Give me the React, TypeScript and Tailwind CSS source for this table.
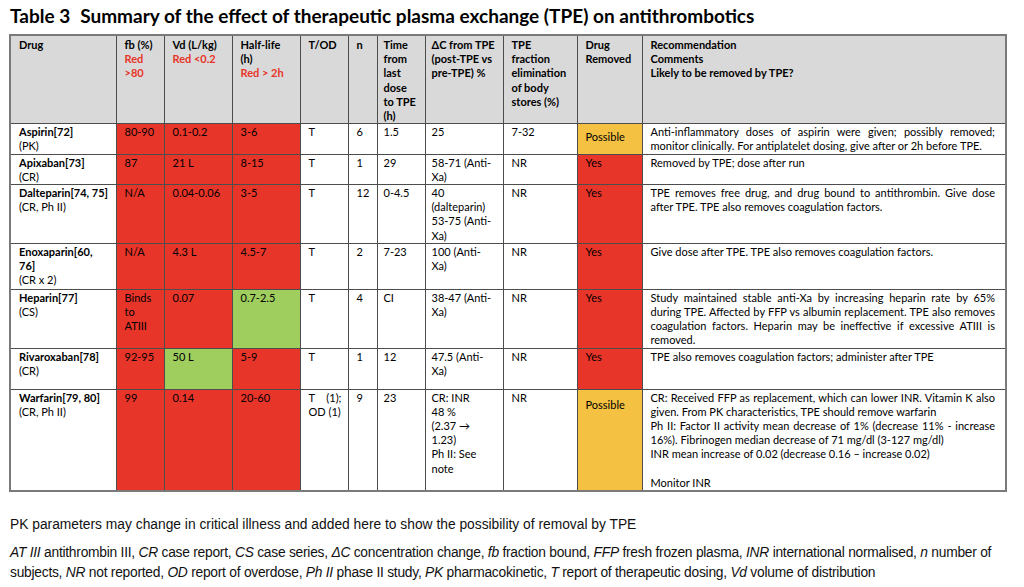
import type { ReactNode } from "react";

type Tone = "red" | "green" | "amber" | "none";

const toneBg: Record<Tone, string> = {
  red: "bg-[#e8352a]",
  green: "bg-[#9fcd5e]",
  amber: "bg-[#f4c143]",
  none: "",
};

interface CellProps {
  children: ReactNode;
  tone?: Tone;
  className?: string;
}

function Td({ children, tone = "none", className = "" }: CellProps) {
  return (
    <td className={`border border-[#4d4d4d] align-top px-2 pt-[1px] whitespace-nowrap overflow-hidden ${toneBg[tone]} ${className}`}>
      {children}
    </td>
  );
}

function Th({ children, className = "" }: { children: ReactNode; className?: string }) {
  return (
    <th className={`border border-[#4d4d4d] bg-[#d9d9d9] align-top text-left font-bold px-2 pt-[2px] whitespace-nowrap overflow-hidden ${className}`}>
      {children}
    </th>
  );
}

// lines that stretch edge to edge, as in the justified source
function J({ children }: { children: ReactNode }) {
  return <div className="whitespace-normal text-justify [text-align-last:justify]">{children}</div>;
}

function L({ children }: { children: ReactNode }) {
  return <div>{children}</div>;
}

function DrugName({ name, note }: { name: ReactNode; note: string }) {
  return (
    <>
      <div className="font-bold">{name}</div>
      <div>{note}</div>
    </>
  );
}

const Red = ({ children }: { children: ReactNode }) => <div className="text-[#e8352a]">{children}</div>;

export default function App() {
  return (
    <div className="w-[1024px] h-[587px] bg-white text-black overflow-hidden font-['Lato','Open_Sans',sans-serif]">
      <h1 className="h-[34px] pl-[10px] pt-[3px] text-[19px] leading-[26px] font-bold">
        <span className="mr-[10px]">Table 3</span>Summary of the effect of therapeutic plasma exchange (TPE) on antithrombotics
      </h1>

      <table className="ml-[9px] w-[996px] table-fixed border-collapse border-2 border-[#7a7a7a] text-[11px] leading-[14.2px]">
        <colgroup>
          <col className="w-[106px]" />
          <col className="w-[48px]" />
          <col className="w-[68px]" />
          <col className="w-[68px]" />
          <col className="w-[48px]" />
          <col className="w-[29px]" />
          <col className="w-[48px]" />
          <col className="w-[78px]" />
          <col className="w-[74px]" />
          <col className="w-[65px]" />
          <col className="w-[364px]" />
        </colgroup>
        <thead>
          <tr className="h-[86px]">
            <Th>Drug</Th>
            <Th>
              <L>fb (%)</L>
              <Red>Red</Red>
              <Red>&gt;80</Red>
            </Th>
            <Th>
              <L>Vd (L/kg)</L>
              <Red>Red &lt;0.2</Red>
            </Th>
            <Th>
              <L>Half-life</L>
              <L>(h)</L>
              <Red>Red &gt; 2h</Red>
            </Th>
            <Th>T/OD</Th>
            <Th>n</Th>
            <Th className="pl-1.5">
              <L>Time</L>
              <L>from</L>
              <L>last</L>
              <L>dose</L>
              <L>to TPE</L>
              <L>(h)</L>
            </Th>
            <Th className="pl-1.5">
              <L>ΔC from TPE</L>
              <L>(post-TPE vs</L>
              <L>pre-TPE) %</L>
            </Th>
            <Th>
              <L>TPE</L>
              <L>fraction</L>
              <L>elimination</L>
              <L>of body</L>
              <L>stores (%)</L>
            </Th>
            <Th>
              <L>Drug</L>
              <L>Removed</L>
            </Th>
            <Th>
              <L>Recommendation</L>
              <L>Comments</L>
              <L>Likely to be removed by TPE?</L>
            </Th>
          </tr>
        </thead>
        <tbody>
          <tr className="h-[28px]">
            <Td><DrugName name="Aspirin[72]" note="(PK)" /></Td>
            <Td tone="red">80-90</Td>
            <Td tone="red">0.1-0.2</Td>
            <Td tone="red">3-6</Td>
            <Td>T</Td>
            <Td>6</Td>
            <Td className="pl-1.5">1.5</Td>
            <Td className="pl-1.5">25</Td>
            <Td>7-32</Td>
            <Td tone="amber" className="pt-[6px]">Possible</Td>
            <Td className="pr-[10px]">
              <J>Anti-inflammatory doses of aspirin were given; possibly removed;</J>
              <L>monitor clinically. For antiplatelet dosing, give after or 2h before TPE.</L>
            </Td>
          </tr>
          <tr className="h-[28px]">
            <Td><DrugName name="Apixaban[73]" note="(CR)" /></Td>
            <Td tone="red">87</Td>
            <Td tone="red">21 L</Td>
            <Td tone="red">8-15</Td>
            <Td>T</Td>
            <Td>1</Td>
            <Td className="pl-1.5">29</Td>
            <Td className="pl-1.5">
              <L>58-71 (Anti-</L>
              <L>Xa)</L>
            </Td>
            <Td>NR</Td>
            <Td tone="red">Yes</Td>
            <Td className="pr-[10px]">Removed by TPE; dose after run</Td>
          </tr>
          <tr className="h-[56px]">
            <Td><DrugName name="Dalteparin[74, 75]" note="(CR, Ph II)" /></Td>
            <Td tone="red">N/A</Td>
            <Td tone="red">0.04-0.06</Td>
            <Td tone="red">3-5</Td>
            <Td>T</Td>
            <Td>12</Td>
            <Td className="pl-1.5">0-4.5</Td>
            <Td className="pl-1.5">
              <L>40</L>
              <L>(dalteparin)</L>
              <L>53-75 (Anti-</L>
              <L>Xa)</L>
            </Td>
            <Td>NR</Td>
            <Td tone="red">Yes</Td>
            <Td className="pr-[10px]">
              <J>TPE removes free drug, and drug bound to antithrombin. Give dose</J>
              <L>after TPE. TPE also removes coagulation factors.</L>
            </Td>
          </tr>
          <tr className="h-[46px]">
            <Td>
              <div className="font-bold">Enoxaparin[60,</div>
              <div className="font-bold">76]</div>
              <div>(CR x 2)</div>
            </Td>
            <Td tone="red">N/A</Td>
            <Td tone="red">4.3 L</Td>
            <Td tone="red">4.5-7</Td>
            <Td>T</Td>
            <Td>2</Td>
            <Td className="pl-1.5">7-23</Td>
            <Td className="pl-1.5">
              <L>100 (Anti-</L>
              <L>Xa)</L>
            </Td>
            <Td>NR</Td>
            <Td tone="red">Yes</Td>
            <Td className="pr-[10px]">Give dose after TPE. TPE also removes coagulation factors.</Td>
          </tr>
          <tr className="h-[57px]">
            <Td><DrugName name="Heparin[77]" note="(CS)" /></Td>
            <Td tone="red">
              <L>Binds</L>
              <L>to</L>
              <L>ATIII</L>
            </Td>
            <Td tone="red">0.07</Td>
            <Td tone="green">0.7-2.5</Td>
            <Td>T</Td>
            <Td>4</Td>
            <Td className="pl-1.5">CI</Td>
            <Td className="pl-1.5">
              <L>38-47 (Anti-</L>
              <L>Xa)</L>
            </Td>
            <Td>NR</Td>
            <Td tone="red">Yes</Td>
            <Td className="pr-[10px]">
              <J>Study maintained stable anti-Xa by increasing heparin rate by 65%</J>
              <J>during TPE. Affected by FFP vs albumin replacement. TPE also removes</J>
              <J>coagulation factors. Heparin may be ineffective if excessive ATIII is</J>
              <L>removed.</L>
            </Td>
          </tr>
          <tr className="h-[41px]">
            <Td><DrugName name="Rivaroxaban[78]" note="(CR)" /></Td>
            <Td tone="red">92-95</Td>
            <Td tone="green">50 L</Td>
            <Td tone="red">5-9</Td>
            <Td>T</Td>
            <Td>1</Td>
            <Td className="pl-1.5">12</Td>
            <Td className="pl-1.5">
              <L>47.5 (Anti-</L>
              <L>Xa)</L>
            </Td>
            <Td>NR</Td>
            <Td tone="red">Yes</Td>
            <Td className="pr-[10px]">TPE also removes coagulation factors; administer after TPE</Td>
          </tr>
          <tr className="h-[102px]">
            <Td><DrugName name="Warfarin[79, 80]" note="(CR, Ph II)" /></Td>
            <Td tone="red">99</Td>
            <Td tone="red">0.14</Td>
            <Td tone="red">20-60</Td>
            <Td className="pr-1.5">
              <J>T (1);</J>
              <L>OD (1)</L>
            </Td>
            <Td>9</Td>
            <Td className="pl-1.5">23</Td>
            <Td className="pl-1.5">
              <L>CR: INR</L>
              <L>48 %</L>
              <L>(2.37 →</L>
              <L>1.23)</L>
              <L>Ph II: See</L>
              <L>note</L>
            </Td>
            <Td>NR</Td>
            <Td tone="amber" className="pt-[8px]">Possible</Td>
            <Td className="pr-[10px]">
              <J>CR: Received FFP as replacement, which can lower INR. Vitamin K also</J>
              <L>given. From PK characteristics, TPE should remove warfarin</L>
              <J>Ph II: Factor II activity mean decrease of 1% (decrease 11% - increase</J>
              <L>16%). Fibrinogen median decrease of 71 mg/dl (3-127 mg/dl)</L>
              <L>INR mean increase of 0.02 (decrease 0.16 – increase 0.02)</L>
              <L>&nbsp;</L>
              <L>Monitor INR</L>
            </Td>
          </tr>
        </tbody>
      </table>

      <div className="pl-[10px] pt-[23px] text-[13.8px] text-[#111] font-['Liberation_Sans',sans-serif]">
        <p className="leading-[20px]">PK parameters may change in critical illness and added here to show the possibility of removal by TPE</p>
        <p className="mt-[8px] leading-[20px] pr-[8px] tracking-[-0.25px]">
          <i>AT III</i> antithrombin III, <i>CR</i> case report, <i>CS</i> case series, <i>ΔC</i> concentration change,{" "}
          <i>fb</i> fraction bound, <i>FFP</i> fresh frozen plasma, <i>INR</i> international normalised, <i>n</i> number of
          subjects, <i>NR</i> not reported, <i>OD</i> report of overdose, <i>Ph II</i> phase II study, <i>PK</i>{" "}
          pharmacokinetic, <i>T</i> report of therapeutic dosing, <i>Vd</i> volume of distribution
        </p>
      </div>
    </div>
  );
}
